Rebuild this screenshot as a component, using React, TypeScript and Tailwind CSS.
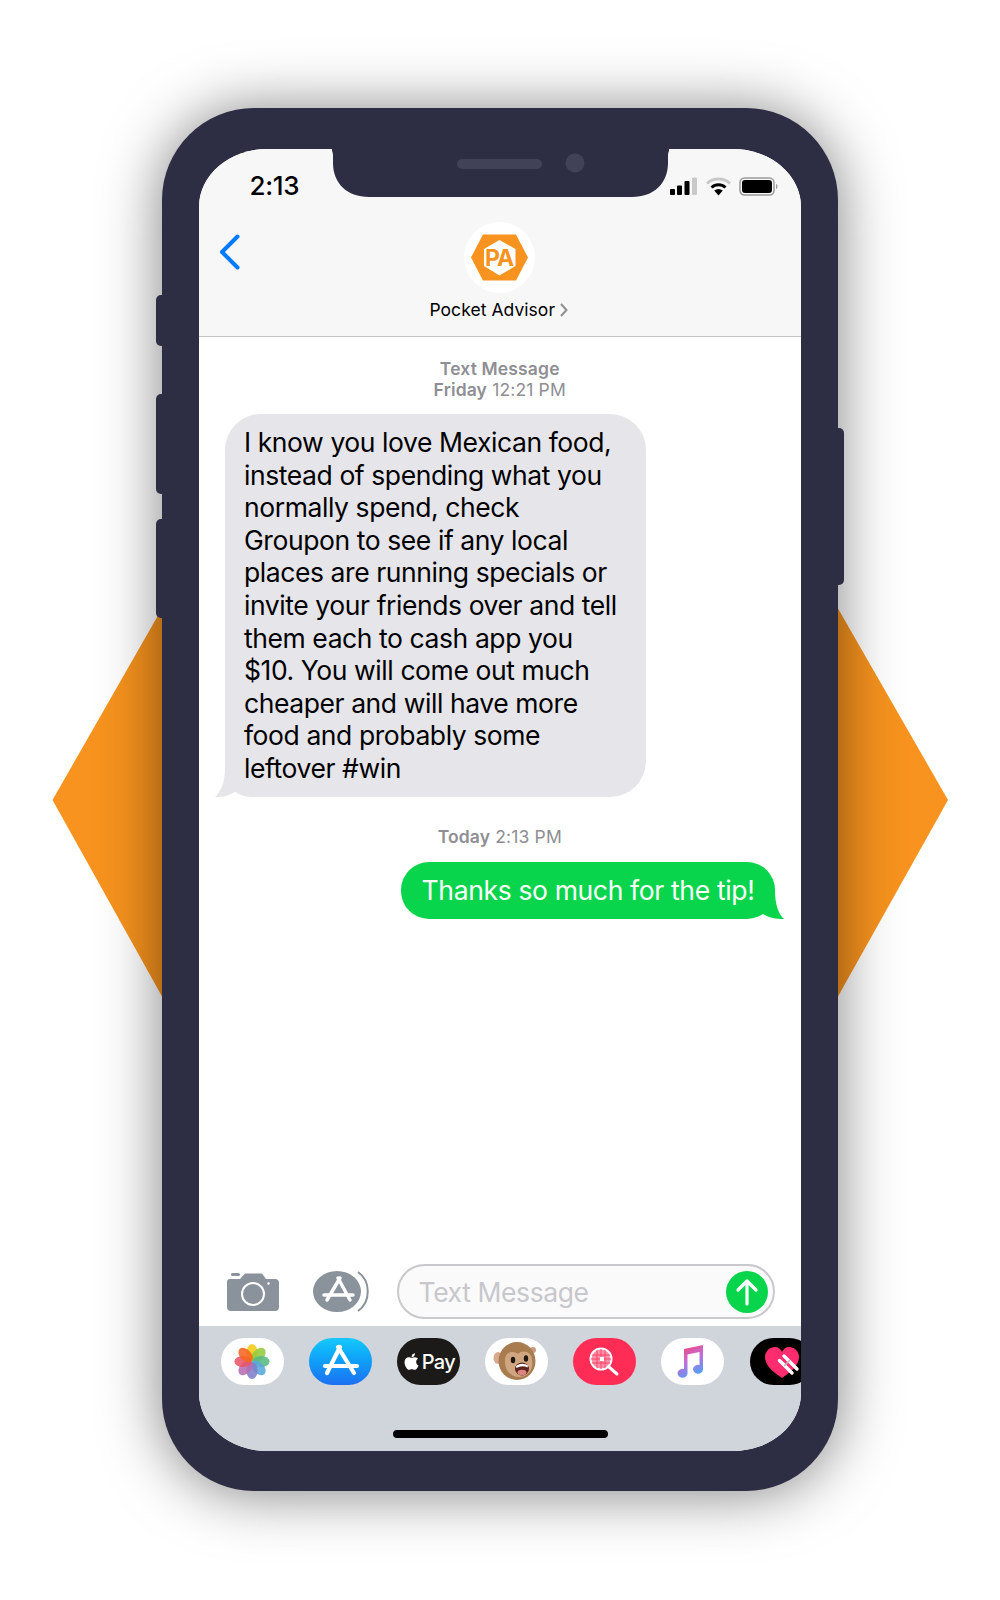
import { FaApple } from "react-icons/fa";

const messageLines = [
  "I know you love Mexican food,",
  "instead of spending what you",
  "normally spend, check",
  "Groupon to see if any local",
  "places are running specials or",
  "invite your friends over and tell",
  "them each to cash app you",
  "$10. You will come out much",
  "cheaper and will have more",
  "food and probably some",
  "leftover #win",
];

const petals = [
  { a: 0, c: "#f6c915" },
  { a: 45, c: "#93c93e" },
  { a: 90, c: "#57b97f" },
  { a: 135, c: "#5aa7dc" },
  { a: 180, c: "#7f7fc9" },
  { a: 225, c: "#b56db3" },
  { a: 270, c: "#e8556b" },
  { a: 315, c: "#f5651f" },
];

function PhotosIcon() {
  return (
    <svg width="63" height="47" viewBox="0 0 63 47">
      {petals.map((p) => (
        <ellipse
          key={p.a}
          cx="31"
          cy="14.5"
          rx="5.6"
          ry="8.6"
          fill={p.c}
          fillOpacity="0.88"
          transform={`rotate(${p.a} 31 23.5)`}
        />
      ))}
    </svg>
  );
}

function MonkeyIcon() {
  return (
    <svg width="63" height="47" viewBox="0 0 63 47">
      <ellipse cx="13" cy="20" rx="4.5" ry="6" fill="#d9a98c" />
      <circle cx="48" cy="12" r="3" fill="#c99a80" />
      <ellipse cx="32" cy="23" rx="18.5" ry="19" fill="#a87c4f" />
      <path d="M20 22 C20 14 28 12 33 16 C38 11 47 14 47 22 C49 32 42 39 34 39 C26 39 19 32 20 22Z" fill="#cfa67f" />
      <ellipse cx="28" cy="22" rx="2.2" ry="3.2" fill="#1f1712" />
      <ellipse cx="41" cy="20.5" rx="2.2" ry="3.2" fill="#1f1712" />
      <ellipse cx="37" cy="31" rx="7" ry="6.5" fill="#5e2320" />
      <path d="M31 28 Q37 24 43 27.5 L42.5 29.5 Q37 27 31.5 30Z" fill="#fff" />
      <ellipse cx="37" cy="34.5" rx="4.5" ry="2.8" fill="#d9857d" />
    </svg>
  );
}

function SearchIcon() {
  return (
    <svg width="63" height="47" viewBox="0 0 63 47">
      <circle cx="28" cy="21" r="10.5" fill="#ff8fa6" stroke="#fff" strokeWidth="2" />
      <g stroke="#ff2d55" strokeWidth="0.9" opacity="0.8">
        <path d="M19 17 H37 M18 21 H38 M19 25 H37 M24 12 V30 M28 11 V31 M32 12 V30" />
      </g>
      <rect x="27" y="19" width="4" height="4" fill="#fff" />
      <path d="M36 29 L44 36" stroke="#fff" strokeWidth="3" strokeLinecap="round" />
    </svg>
  );
}

function MusicIcon() {
  return (
    <svg width="63" height="47" viewBox="0 0 63 47">
      <defs>
        <linearGradient id="musicNote" x1="0" y1="0" x2="0.4" y2="1">
          <stop offset="0" stopColor="#fb3c5c" />
          <stop offset="0.55" stopColor="#c66bd8" />
          <stop offset="1" stopColor="#5a9cf5" />
        </linearGradient>
      </defs>
      <path
        d="M23 11 L42 7 V31.5 A5 4.5 0 1 1 38.5 27 V14 L26.5 16.5 V35.5 A5 4.5 0 1 1 23 31 Z"
        fill="url(#musicNote)"
      />
    </svg>
  );
}

function HeartIcon() {
  return (
    <svg width="63" height="47" viewBox="0 0 63 47">
      <path
        d="M32 40 C20 32 15 26 15 19 C15 13 20 9 25 9 C28 9 31 11 32 14 C33 11 36 9 39 9 C44 9 49 13 49 19 C49 26 44 32 32 40Z"
        fill="#ff2d6f"
      />
      <path d="M34 18 L47 31" stroke="#fff" strokeWidth="3.4" strokeLinecap="round" />
      <path d="M29.5 22.5 L42 35" stroke="#fff" strokeWidth="3.4" strokeLinecap="round" />
      <path d="M37 25 L40 22 M34 28 L37 25" stroke="#bdbdbd" strokeWidth="1.6" />
    </svg>
  );
}

export default function App() {
  return (
    <div className="relative w-[1000px] h-[1600px] overflow-hidden bg-white pt-[108px] font-['Inter','Liberation_Sans',sans-serif]">
      {/* orange hexagon behind the phone */}
      <svg className="absolute left-0 top-0" width="1000" height="1600" viewBox="0 0 1000 1600">
        <polygon points="52.5,800 164,605 836,605 948,800 836,1000 164,1000" fill="#f7931e" />
      </svg>

      <div className="relative mx-auto w-[676px] h-[1383px] rounded-[92px] bg-[#2d2e43] pt-[41px] pb-[40px] pl-[36.5px] pr-[37px] shadow-[0_2px_60px_rgba(0,0,0,0.5)]">
        {/* side buttons */}
        <div className="absolute left-[-6px] top-[187px] h-[51px] w-[8px] rounded-l-[5px] bg-[#2d2e43]" />
        <div className="absolute left-[-6px] top-[286px] h-[100px] w-[8px] rounded-l-[5px] bg-[#2d2e43]" />
        <div className="absolute left-[-6px] top-[411px] h-[99px] w-[8px] rounded-l-[5px] bg-[#2d2e43]" />
        <div className="absolute right-[-6px] top-[320px] h-[157px] w-[8px] rounded-r-[5px] bg-[#2d2e43]" />

        <div className="relative flex h-full flex-col overflow-hidden rounded-[68px/58px] bg-white">
          {/* notch */}
          <svg className="absolute left-[133px] top-0" width="337" height="48" viewBox="0 0 337 48">
            <path
              d="M-4 0 H341 C337 0 336 3 336 7 V14 C336 34 322 48 300 48 H37 C15 48 1 34 1 14 V7 C1 3 0 0 -4 0Z"
              fill="#2d2e43"
            />
            <rect x="125" y="10" width="85" height="10" rx="5" fill="#414257" />
            <ellipse cx="243" cy="14" rx="9.5" ry="9.5" fill="#414257" />
          </svg>

          {/* header */}
          <div className="h-[188px] shrink-0 border-b border-[#c4c4c8] bg-[#f7f7f7]">
            <div className="flex h-[73px] justify-between pl-[51px] pr-[22px] pt-[22px]">
              <span className="text-[26px] leading-[30px] font-medium tracking-[-0.3px] text-black">2:13</span>
              <div className="flex h-[30px] items-center gap-[8px] pt-[1px]">
                <svg width="28" height="19" viewBox="0 0 28 19">
                  <rect x="0" y="12" width="5" height="6" rx="1" fill="#000" />
                  <rect x="7" y="8.5" width="5" height="9.5" rx="1" fill="#000" />
                  <rect x="14.5" y="4" width="5" height="14" rx="1" fill="#000" />
                  <rect x="22" y="0.5" width="5" height="17.5" rx="1" fill="#c9c9c9" />
                </svg>
                <svg width="25" height="19" viewBox="0 0 25 19">
                  <path d="M1 6.5 C7 0.5 18 0.5 24 6.5" stroke="#c9c9c9" strokeWidth="3" fill="none" />
                  <path d="M5.5 10.5 C9.5 6.8 15.5 6.8 19.5 10.5" stroke="#000" strokeWidth="3" fill="none" />
                  <path d="M8.2 13.5 L12.5 18.5 L16.8 13.5 C14 11.5 11 11.5 8.2 13.5Z" fill="#000" />
                </svg>
                <svg width="40" height="19" viewBox="0 0 40 19">
                  <rect x="1" y="1" width="34" height="17" rx="4.5" stroke="#9a9a9a" strokeWidth="1.5" fill="none" />
                  <rect x="3" y="3" width="30" height="13" rx="3" fill="#000" />
                  <path d="M37 7 C39 7.5 39 11.5 37 12Z" fill="#9a9a9a" />
                </svg>
              </div>
            </div>
            <div className="grid grid-cols-[1fr_auto_1fr]">
              <div className="pl-[20px] pt-[12px]">
                <svg width="21" height="36" viewBox="0 0 21 36">
                  <path d="M18.5 2.5 L3 18 L18.5 33.5" stroke="#007aff" strokeWidth="4" strokeLinecap="round" strokeLinejoin="round" fill="none" />
                </svg>
              </div>
              <div className="flex flex-col items-center">
                <div className="flex h-[71px] w-[71px] items-center justify-center rounded-full bg-white">
                  <svg width="57" height="47" viewBox="0 0 57 47">
                    <polygon points="0,23.5 12,0.5 45,0.5 57,23.5 45,46.5 12,46.5" fill="#f7931e" />
                    <polygon points="28.5,6 44.5,15 44.5,32 28.5,41.5 13,32 13,15" fill="#fff" />
                    <text x="28" y="32" textAnchor="middle" fontFamily="Inter, sans-serif" fontSize="23" fontWeight="700" letterSpacing="-1" fill="#f7931e">PA</text>
                  </svg>
                </div>
                <div className="mr-[2px] mt-[5px] flex items-center gap-[5px] text-[17.5px] leading-[24px] tracking-[0.05px] text-black">
                  <span>Pocket Advisor</span>
                  <svg width="8" height="14" viewBox="0 0 8 14">
                    <path d="M1 1 L6.5 7 L1 13" stroke="#8e8e93" strokeWidth="2" fill="none" />
                  </svg>
                </div>
              </div>
              <div />
            </div>
          </div>

          {/* messages */}
          <div className="flex flex-1 flex-col">
            <div className="pt-[21px] text-center text-[17.5px] leading-[21px] tracking-[0.15px] text-[#8e8e93]">
              <div className="font-semibold">Text Message</div>
              <div>
                <span className="font-semibold">Friday</span> 12:21 PM
              </div>
            </div>

            <div className="relative ml-[26.5px] mt-[14px] w-[421px] rounded-[36px] rounded-bl-[26px] bg-[#e5e5ea] pb-[12px] pl-[19px] pt-[12px] text-[26.5px] leading-[32.6px] tracking-[-0.42px] text-black">
              <svg className="absolute left-[-10px] bottom-0" width="30" height="28" viewBox="0 0 30 28">
                <path d="M10 0 C10 12 6 23 0 28 C8 28 15 27 20.5 22 V0Z" fill="#e5e5ea" />
              </svg>
              <div className="relative whitespace-nowrap">
                {messageLines.map((line) => (
                  <div key={line}>{line}</div>
                ))}
              </div>
            </div>

            <div className="mt-[29px] text-center text-[17.5px] leading-[21px] tracking-[0.15px] text-[#8e8e93]">
              <span className="font-semibold">Today</span> 2:13 PM
            </div>

            <div className="relative ml-auto mr-[26px] mt-[15px] flex h-[57px] w-[374px] items-center justify-center rounded-[28px] bg-[#09d54c] pt-[2px] text-[26.5px] tracking-[-0.35px] text-white">
              <svg className="absolute right-[-9px] bottom-0" width="30" height="28" viewBox="0 0 30 28">
                <path d="M21 0 C21 12 24 23 30 28 C22 28 15 27 9 23 V0Z" fill="#09d54c" />
              </svg>
              <span className="relative">Thanks so much for the tip!</span>
            </div>

            {/* input row */}
            <div className="mb-[7px] mt-auto flex h-[55px] items-center pl-[28px] pr-[26px]">
              <svg width="52" height="39" viewBox="0 0 52 39">
                <rect x="4" y="1" width="9" height="3" rx="1.5" fill="#8a929c" />
                <path
                  d="M3 7 H13 L18 1.5 H35 L39 7 H48 Q52 7 52 11 V35 Q52 39 48 39 H4 Q0 39 0 35 V10 Q0 7 3 7Z"
                  fill="#8a929c"
                />
                <circle cx="26" cy="22" r="11" stroke="#fff" strokeWidth="2" fill="none" />
                <circle cx="41.5" cy="11.5" r="1.2" fill="#fff" />
              </svg>
              <svg className="ml-[34px]" width="58" height="41" viewBox="0 0 58 41">
                <path d="M45 1 C58 10 58 31 45 40" stroke="#8a929c" strokeWidth="2" fill="none" />
                <ellipse cx="24" cy="20.5" rx="24" ry="20.5" fill="#8a929c" />
                <g stroke="#fff" strokeWidth="3.5" strokeLinecap="round" fill="none">
                  <path d="M27 7 L14 29" />
                  <path d="M25 7 L37 29" />
                  <path d="M11 24 H40" />
                </g>
              </svg>
              <div className="ml-[26px] flex h-[55px] w-[378px] items-center justify-between rounded-[28px] border-2 border-[#c9c9cd] bg-[#fafafa] pl-[20px] pr-[5px] text-[26.5px] tracking-[-0.4px] text-[#c7c7cc]">
                <span className="pt-[3px]">Text Message</span>
                <div className="flex h-[42px] w-[42px] items-center justify-center rounded-full bg-[#09d54c]">
                  <svg width="24" height="28" viewBox="0 0 24 28">
                    <path d="M12 26 V3 M3 12 L12 3 L21 12" stroke="#fff" strokeWidth="3.2" strokeLinecap="round" strokeLinejoin="round" fill="none" />
                  </svg>
                </div>
              </div>
            </div>
          </div>

          {/* app dock */}
          <div className="flex h-[125px] shrink-0 flex-col overflow-hidden bg-[#d0d4db] pt-[12px]">
            <div className="flex gap-[25.2px] pl-[22px]">
              <div className="h-[47px] w-[63px] shrink-0 rounded-[24px] bg-white">
                <PhotosIcon />
              </div>
              <div className="h-[47px] w-[63px] shrink-0 rounded-[24px] bg-gradient-to-b from-[#17c9fb] to-[#1d6ff2]">
                <svg width="63" height="47" viewBox="0 0 63 47">
                  <g stroke="#fff" strokeWidth="4.2" strokeLinecap="round" fill="none">
                    <path d="M31 9 L18 35" />
                    <path d="M29 9 L45 35" />
                    <path d="M16 28 H48" />
                  </g>
                </svg>
              </div>
              <div className="flex h-[47px] w-[63px] shrink-0 items-center justify-center gap-[1px] rounded-[24px] bg-[#1b1a18] text-[20px] font-medium tracking-[-0.6px] text-white">
                <FaApple className="text-[19px]" />
                <span>Pay</span>
              </div>
              <div className="h-[47px] w-[63px] shrink-0 rounded-[24px] bg-white">
                <MonkeyIcon />
              </div>
              <div className="h-[47px] w-[63px] shrink-0 rounded-[24px] bg-[#ff2d55]">
                <SearchIcon />
              </div>
              <div className="h-[47px] w-[63px] shrink-0 rounded-[24px] bg-white">
                <MusicIcon />
              </div>
              <div className="h-[47px] w-[63px] shrink-0 rounded-[24px] bg-black">
                <HeartIcon />
              </div>
            </div>
            <div className="ml-[194px] mt-[45px] h-[8px] w-[215px] rounded-full bg-black" />
          </div>
        </div>
      </div>
    </div>
  );
}
